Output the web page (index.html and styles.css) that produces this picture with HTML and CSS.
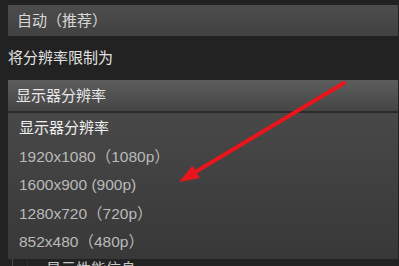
FILE: index.html
```html
<!DOCTYPE html>
<html lang="zh-CN">
<head>
    <meta charset="UTF-8">
    <title>分辨率设置</title>
    <link rel="stylesheet" href="styles.css">
</head>
<body>
    <div class="settings">
        <div class="bar">自动（推荐）</div>
        <div class="label">将分辨率限制为</div>
        <div class="select">显示器分辨率</div>
        <ul class="menu">
            <li class="menu-head">显示器分辨率</li>
            <li>1920x1080（1080p）</li>
            <li>1600x900 (900p)</li>
            <li>1280x720（720p）</li>
            <li>852x480（480p）</li>
        </ul>
        <div class="tree-row">
            <span class="tree-line"></span>
            <span class="tree-text">显示性能信息</span>
        </div>
    </div>

    <!-- red annotation arrow -->
    <svg class="arrow" width="399" height="266" viewBox="0 0 399 266">
        <line x1="344" y1="83" x2="192" y2="174" stroke="#e8151d" stroke-width="4" stroke-linecap="round"/>
        <polygon points="179,182 192.5,165.5 200,178" fill="#e8151d"/>
    </svg>
</body>
</html>
```

FILE: styles.css
```css
body {
    margin: 0;
    background-color: #222;
    font-family: 'Liberation Sans', 'Noto Sans CJK SC', sans-serif;
    font-size: 15px;
    overflow: hidden;
}

.settings {
    padding: 5px 1px 0 8px;
}

.bar {
    height: 31px;
    line-height: 31px;
    padding-left: 9px;
    color: #d8d8d8;
    background: linear-gradient(#4d4d4d, #414141);
}

.label {
    height: 44px;
    line-height: 44px;
    color: #e2e2e2;
}

.select {
    height: 31px;
    line-height: 31px;
    padding-left: 8px;
    color: #e8e8e8;
    background: linear-gradient(#5d5d5d, #454545);
    border-bottom: 2px solid #2b2b2b;
}

.menu {
    list-style: none;
    margin: 0;
    padding: 1px 0 3px 11px;
    background: linear-gradient(#484848, #383838);
    height: 142px;
}

.menu li {
    height: 28.5px;
    line-height: 28.5px;
    color: #bababa;
    font-size: 15.5px;
}

.menu .menu-head {
    color: #f0f0f0;
    font-size: 15px;
}

.tree-row {
    display: flex;
    height: 20px;
    padding-left: 4px;
}

.tree-line {
    width: 14px;
    border-left: 1px solid #4a4a4a;
    border-right: 1px solid #2e2e2e;
}

.tree-text {
    margin-left: 18px;
    margin-top: 1px;
    line-height: 18px;
    color: #c8c8c8;
}

.arrow {
    position: absolute;
    left: 0;
    top: 0;
}
```
